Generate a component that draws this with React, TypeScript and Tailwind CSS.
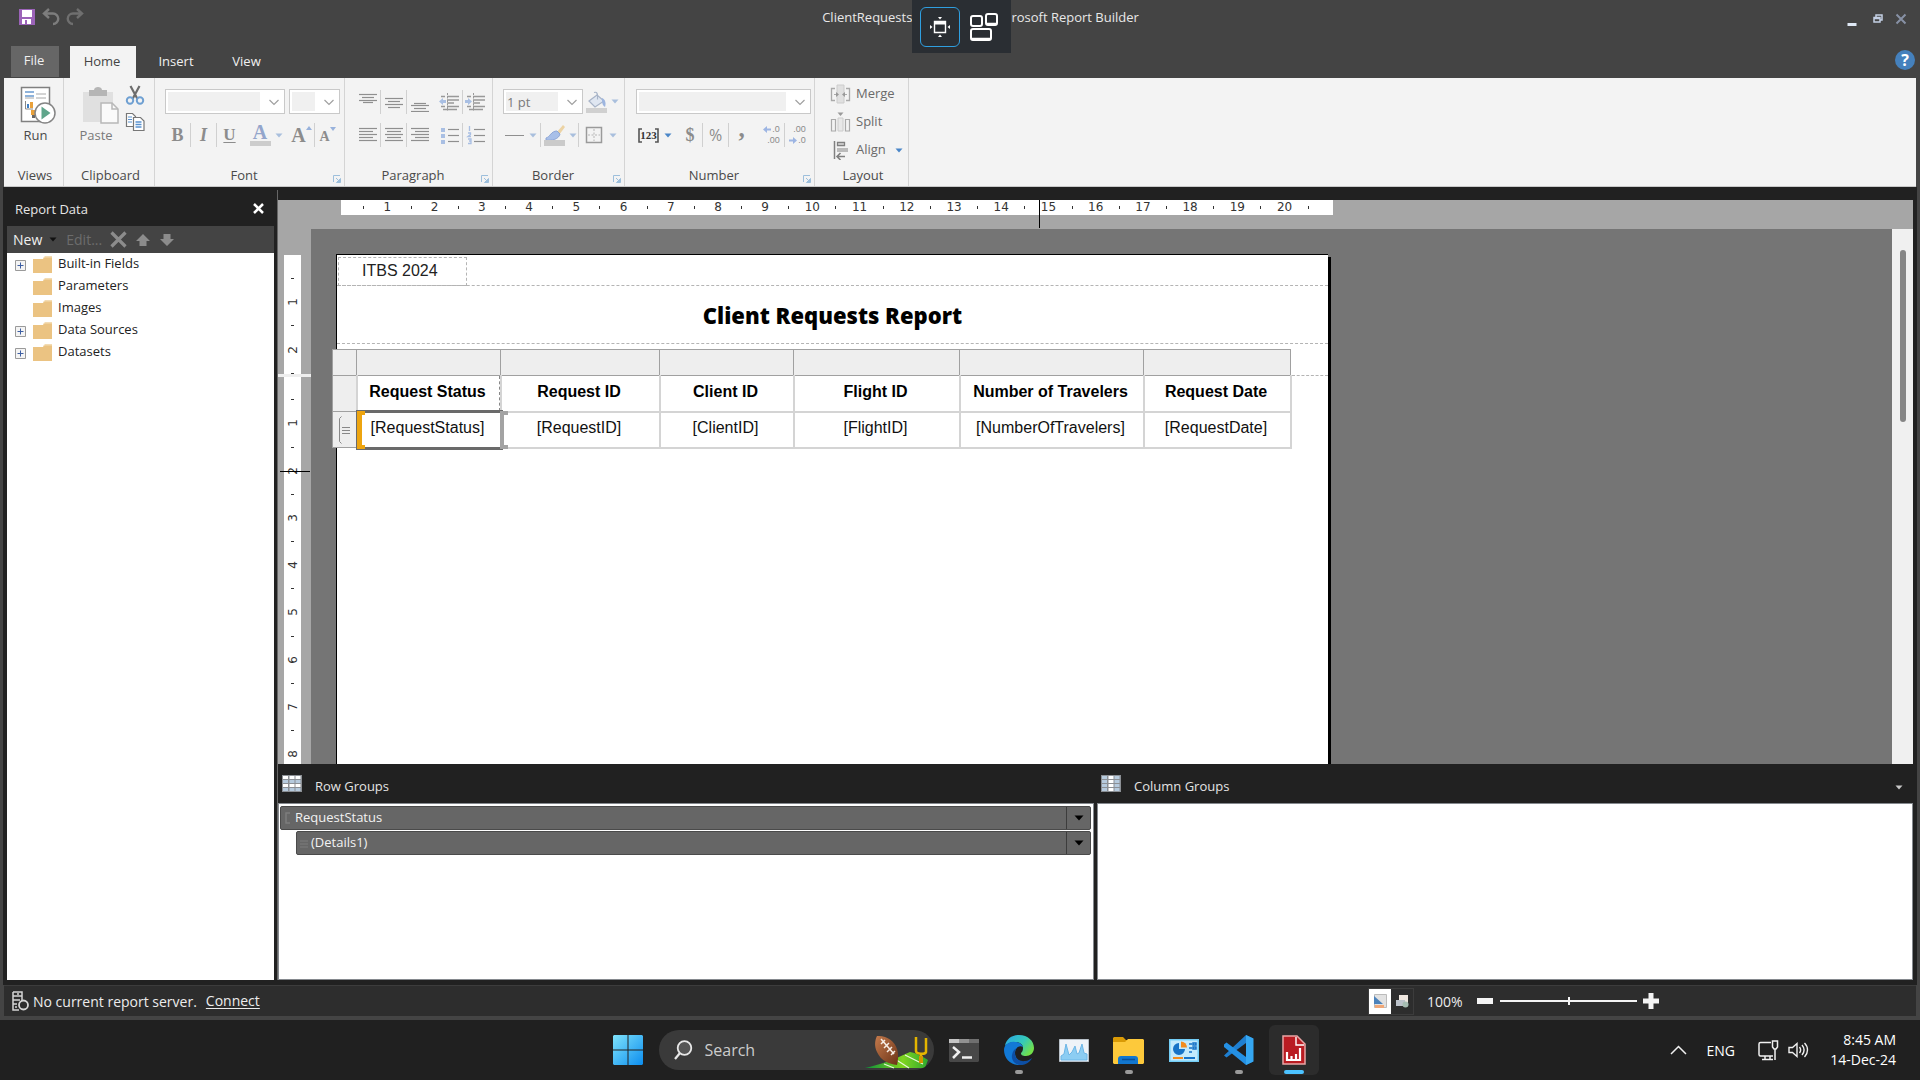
import React from "react";

type Kids = { children?: React.ReactNode };

/* ---------- small shared pieces ---------- */

function Arrow({ color = "#a9bfdd", className = "" }: { color?: string; className?: string }) {
  return (
    <svg width="8" height="5" viewBox="0 0 8 5" className={`shrink-0 ${className}`} aria-hidden="true">
      <path d="M0.5 0.5h7L4 4.5z" fill={color} />
    </svg>
  );
}

function Sep() {
  return <span className="h-6 w-px shrink-0 bg-[#d0d0d0]" />;
}

function Tool({ label, w = "w-[25px]", children }: Kids & { label: string; w?: string }) {
  return (
    <button type="button" aria-label={label} className={`flex h-6 shrink-0 items-center justify-center ${w}`}>
      {children}
    </button>
  );
}

function Group({ title, w, launcher = false, children }: Kids & { title: string; w: string; launcher?: boolean }) {
  return (
    <section className={`flex shrink-0 flex-col border-r border-[#d4d4d4] pt-[11px] ${w}`} aria-label={title}>
      <div className="flex-1">{children}</div>
      <div className={`relative flex h-[20px] items-center justify-center text-[#4a4a4a] ${launcher ? "pr-[11px]" : "pl-[3px]"}`}>
        {title}
        {launcher && (
          <button type="button" aria-label={`${title} settings`} className="absolute right-[3px] bottom-[3px]">
            <svg width="8" height="8" viewBox="0 0 8 8">
              <path d="M0.5 7V0.5H7" fill="none" stroke="#9dbfdc" />
              <path d="M3 3l3 3M7.5 3.5v4h-4z" stroke="#9dbfdc" fill="#9dbfdc" />
            </svg>
          </button>
        )}
      </div>
    </section>
  );
}

function Combo({ label, value = "", w }: { label: string; value?: string; w: string }) {
  return (
    <div className={`relative flex h-[25px] shrink-0 border border-[#c9c9c9] bg-white p-[2px] ${w}`}>
      <select
        aria-label={label}
        className="min-w-0 flex-1 appearance-none bg-[#f0f0f0] pl-px text-[13px] leading-[18px] text-[#7a7a7a] outline-none"
        defaultValue={value}
      >
        <option value={value}>{value}</option>
      </select>
      <svg width="22" height="19" viewBox="0 0 22 19" className="pointer-events-none shrink-0" aria-hidden="true">
        <path d="M9.500 8l4.500 4.500L18.500 8" fill="none" stroke="#a0a0a0" strokeWidth="1.200" />
      </svg>
    </div>
  );
}

/* rows of [x, y, length] */
function Lines({ rows, children }: Kids & { rows: number[][] }) {
  return (
    <svg width="20" height="20" viewBox="0 0 20 20" aria-hidden="true">
      {rows.map(([x, y, l], i) => (
        <path key={i} d={`M${x} ${y + 0.5}h${l}`} stroke="#8f8f8f" strokeWidth="1.200" />
      ))}
      {children}
    </svg>
  );
}

/* ---------- title bar ---------- */

function TitleBar() {
  return (
    <header className="flex h-[40px] shrink-0 items-start bg-[#444444]">
      <div className="flex flex-1 items-center gap-[6px] pt-[8px] pl-[18px]">
        <button type="button" aria-label="Save">
          <svg width="18" height="18" viewBox="0 0 18 18">
            <path d="M1 1h16v16H1z" fill="#9b63b8" />
            <path d="M4 2h10v7H4z" fill="#fff" />
            <path d="M4 11h9v5H4z" fill="#fff" />
            <path d="M7 12h2v4H7z" fill="#9b63b8" />
          </svg>
        </button>
        <button type="button" aria-label="Undo">
          <svg width="18" height="18" viewBox="0 0 18 18" fill="none" stroke="#7d7d7d" strokeWidth="2.400">
            <path d="M7 1L2 5.500l5 4.500M2 5.500h9a5 5 0 0 1 0 10.500" />
          </svg>
        </button>
        <button type="button" aria-label="Redo">
          <svg width="18" height="18" viewBox="0 0 18 18" fill="none" stroke="#6f6f6f" strokeWidth="2.400">
            <path d="M11 1l5 4.500-5 4.500M16 5.500H7A5 5 0 0 0 7 16" />
          </svg>
        </button>
      </div>
      <div className="flex h-[36px] items-center pl-9 text-[13px] text-[#e8e8e8]">
        <span>ClientRequests</span>
        <div className="relative w-[99px] self-start">
          <div className="absolute top-0 left-0 z-10 flex h-[53px] w-[99px] items-center gap-[9px] bg-[#2a2e33] pl-2">
            <button
              type="button"
              aria-label="Fit to window"
              className="flex h-[40px] w-[40px] items-center justify-center rounded-md border border-[#2f9fe0]"
            >
              <svg width="22" height="22" viewBox="0 0 22 22">
                <path d="M5.500 5.500h11v11h-11z" fill="none" stroke="#fff" strokeWidth="1.400" />
                <path d="M5 5h12v3.500H5z" fill="#fff" />
                <path d="M9 1h4l-2 2.500zM9 21h4l-2-2.500zM1 9v4l2.500-2zM21 9v4l-2.500-2z" fill="#fff" />
              </svg>
            </button>
            <button type="button" aria-label="Arrange windows">
              <svg width="30" height="30" viewBox="0 0 30 30" fill="none" stroke="#fff" strokeWidth="2">
                <rect x="2" y="4" width="11" height="10" rx="2" />
                <rect x="17" y="2" width="11" height="11" rx="2" />
                <rect x="2" y="17" width="20" height="11" rx="2" />
                <path d="M18 12h9M3 27h18" strokeWidth="2.500" />
              </svg>
            </button>
          </div>
        </div>
        <span>rosoft Report Builder</span>
      </div>
      <div className="flex flex-1 items-center justify-end gap-[16px] pt-[12px] pr-[13px]">
        <button type="button" aria-label="Minimize" className="pt-[2px]">
          <svg width="10" height="12" viewBox="0 0 10 12">
            <path d="M0.500 9h9v3h-9z" fill="#dfe8f5" />
          </svg>
        </button>
        <button type="button" aria-label="Restore">
          <svg width="10" height="12" viewBox="0 0 10 12" fill="none" stroke="#c3cfe4" strokeWidth="1.500">
            <path d="M3 4V2h6v5H7M1 4.500h6V9H1zM1 5.500h6" />
          </svg>
        </button>
        <button type="button" aria-label="Close" className="-ml-1">
          <svg width="12" height="12" viewBox="0 0 12 12" stroke="#8791a5" strokeWidth="2">
            <path d="M1.500 1.500l9 9M10.500 1.500l-9 9" />
          </svg>
        </button>
      </div>
    </header>
  );
}

function Tabs() {
  return (
    <nav className="flex h-[38px] shrink-0 items-end bg-[#444444] pl-[11px] text-[13px] text-[#f0f0f0]">
      <button type="button" className="mb-px h-[31px] w-[48px] bg-[#666666] pr-[2px] pb-[2px]">File</button>
      <button type="button" className="ml-[11px] h-[32px] w-[66px] bg-[#f3f3f3] pr-[2px] text-[#444444]">Home</button>
      <button type="button" className="h-[32px] w-[80px]">Insert</button>
      <button type="button" className="h-[32px] w-[61px]">View</button>
      <button
        type="button"
        aria-label="Help"
        className="mr-[5px] mb-[8px] ml-auto flex h-5 w-5 items-center justify-center rounded-full bg-[#4581bd] text-[16px] leading-5 font-bold text-white"
      >
        ?
      </button>
    </nav>
  );
}

/* ---------- ribbon ---------- */

const serif = "font-['Liberation_Serif',serif] font-bold";
const decimals = "flex flex-col items-end font-['Liberation_Sans',Arial,sans-serif] text-[9px] leading-[11px]";

function IndentIcon({ flip = false }: { flip?: boolean }) {
  return (
    <svg width="21" height="20" viewBox="0 0 21 20" aria-hidden="true">
      <path d="M2 4.500h4M8 4.500h12M8 8h12M8 11h7M2 14.500h4M8 14.500h12M4 17.500h14" stroke="#999" strokeWidth="1.500" />
      <path d="M8.500 1v18" stroke="#999" strokeDasharray="2 1.500" />
      {flip ? <path d="M7 9.500L3 6v2H0v3h3v2z" fill="#a9bfe3" /> : <path d="M7 8H4V6L0 9.500 4 13v-2h3z" fill="#a9bfe3" />}
    </svg>
  );
}

function Ribbon() {
  return (
    <div className="mx-1 flex h-[109px] shrink-0 overflow-hidden border-b border-[#c8c8c8] bg-[#f3f3f3] text-[13px] text-[#4a4a4a]">
      <Group title="Views" w="w-[60px]">
        <button type="button" className="mx-auto -mt-[3px] flex flex-col items-center pl-[8px] leading-[22px]">
          <svg width="38" height="38" viewBox="0 0 38 38">
            <path d="M2.500 1.500h28v34h-28z" fill="#fff" stroke="#808080" strokeWidth="1.500" />
            <path d="M6 6h9M6 10h9" stroke="#6b9bd0" strokeWidth="1.500" />
            <path d="M17 8h10M6 12h9M17 12h10" stroke="#a8a8a8" />
            <path d="M6.500 15v8H14" stroke="#888" fill="none" />
            <path d="M8 18h2v4H8z" fill="#3f7fc4" />
            <path d="M11 16h3v6h-3zM12 24h4v5h-4z" fill="#e9a13b" />
            <path d="M13 29h3v3h-3z" fill="#666" />
            <circle cx="26" cy="27" r="10" fill="#fff" stroke="#858585" strokeWidth="1.500" />
            <path d="M22.500 20.500v13l9-6.500z" fill="#5fa58b" />
          </svg>
          <span className="-ml-[4px]">Run</span>
        </button>
      </Group>
      <Group title="Clipboard" w="w-[91px]">
        <div className="-mt-[4px] flex pl-[12px]">
          <button type="button" className="flex w-[40px] flex-col items-center leading-[21px] text-[#7a7a7a]">
            <svg width="38" height="40" viewBox="0 0 38 40" className="ml-[8px]">
              <path d="M2 7h30v30H2z" fill="#e0e0e0" />
              <path d="M8 11V5h5c0-4 8-4 8 0h5v6z" fill="#b5b5b5" />
              <path d="M20 18h11l6 6v14H20z" fill="#fafafa" stroke="#b8b8b8" strokeWidth="1.500" />
              <path d="M31 18v6h6" fill="none" stroke="#b8b8b8" strokeWidth="1.500" />
            </svg>
            Paste
          </button>
          <div className="ml-[9px] flex flex-col gap-[7px]">
            <button type="button" aria-label="Cut">
              <svg width="20" height="20" viewBox="0 0 20 20" fill="none">
                <path d="M5.500 1l7 13M14.500 1l-7 13" stroke="#6c6c6c" strokeWidth="2.200" />
                <circle cx="5" cy="15.500" r="3.200" stroke="#6fa0d2" strokeWidth="2" />
                <circle cx="15" cy="15.500" r="3.200" stroke="#6fa0d2" strokeWidth="2" />
              </svg>
            </button>
            <button type="button" aria-label="Copy">
              <svg width="20" height="20" viewBox="0 0 20 20">
                <path d="M1.500 1.500h6l3 3v10h-9z" fill="#fff" stroke="#777" strokeWidth="1.200" />
                <path d="M3 5h4M3 7.500h4M3 10h4" stroke="#5b93cf" />
                <path d="M8.500 5.500h7l3.500 3.500v9.500H8.500z" fill="#fff" stroke="#777" strokeWidth="1.200" />
                <path d="M10.500 10h6M10.500 12.500h6M10.500 15h6" stroke="#5b93cf" strokeWidth="1.400" />
              </svg>
            </button>
          </div>
        </div>
      </Group>
      <Group title="Font" w="w-[190px]" launcher>
        <div className="flex gap-1 pl-[10px]">
          <Combo label="Font family" w="w-[120px]" />
          <Combo label="Font size" w="w-[51px]" />
        </div>
        <div className="mt-[9px] flex items-center pl-[10px] text-[#8c8c8c]">
          <Tool label="Bold"><span className={`${serif} text-[18px]`}>B</span></Tool>
          <Sep />
          <Tool label="Italic"><span className={`${serif} text-[18px] italic`}>I</span></Tool>
          <Sep />
          <Tool label="Underline"><span className={`${serif} text-[17px] underline underline-offset-2`}>U</span></Tool>
          <Tool label="Font color" w="ml-[6px] w-[36px]">
            <span className="flex flex-col items-center">
              <span className={`${serif} h-[16px] text-[20px] leading-[15px] text-[#93a5cb]`}>A</span>
              <span className="h-[5px] w-[21px] bg-[#cccccc]" />
            </span>
            <Arrow className="ml-[4px]" />
          </Tool>
          <Tool label="Grow font" w="ml-[5px] w-[25px]">
            <span className={`${serif} text-[20px] leading-6`}>A</span>
            <svg width="6" height="18" viewBox="0 0 6 18"><path d="M0 4h6L3 0z" fill="#98b2dc" /></svg>
          </Tool>
          <Sep />
          <Tool label="Shrink font">
            <span className={`${serif} pt-[4px] text-[14px] leading-6`}>A</span>
            <svg width="6" height="18" viewBox="0 0 6 18"><path d="M0 1h6L3 5z" fill="#98b2dc" /></svg>
          </Tool>
        </div>
      </Group>
      <Group title="Paragraph" w="w-[148px]" launcher>
        <div className="flex h-[25px] items-center pl-[10px]">
          <Tool label="Align top"><Lines rows={[[1, 2, 18], [4, 5, 12], [1, 8, 18], [5, 10, 10]]} /></Tool>
          <Sep />
          <Tool label="Align middle"><Lines rows={[[1, 6, 18], [4, 9, 12], [1, 12, 18], [4, 15, 12]]} /></Tool>
          <Sep />
          <Tool label="Align bottom"><Lines rows={[[4, 11, 12], [1, 13, 18], [4, 16, 12], [1, 19, 18]]} /></Tool>
          <Tool label="Decrease indent" w="ml-[5px] w-[25px]"><IndentIcon /></Tool>
          <Sep />
          <Tool label="Increase indent"><IndentIcon flip /></Tool>
        </div>
        <div className="mt-[9px] flex items-center pl-[10px]">
          <Tool label="Align left"><Lines rows={[[1, 3, 18], [1, 6, 14], [1, 9, 18], [1, 12, 14], [1, 15, 18]]} /></Tool>
          <Sep />
          <Tool label="Center"><Lines rows={[[1, 3, 18], [3, 6, 14], [1, 9, 18], [3, 12, 14], [1, 15, 18]]} /></Tool>
          <Sep />
          <Tool label="Align right"><Lines rows={[[1, 3, 18], [5, 6, 14], [1, 9, 18], [5, 12, 14], [1, 15, 18]]} /></Tool>
          <Tool label="Bullets" w="ml-[5px] w-[25px]">
            <Lines rows={[[8, 4, 11], [8, 10, 11], [8, 16, 11]]}>
              <path d="M1 3h4v4H1zM1 9h4v4H1zM1 15h4v4H1z" fill="#a9bfe3" />
            </Lines>
          </Tool>
          <Sep />
          <Tool label="Numbering">
            <Lines rows={[[8, 4, 11], [8, 10, 11], [8, 16, 11]]}>
              <path d="M3.500 1v5M2 8h2.500v1.500L2 11.500h3M2 14h3v2H3h2v2.500H2" fill="none" stroke="#a9bfe3" strokeWidth="1.300" />
            </Lines>
          </Tool>
        </div>
      </Group>
      <Group title="Border" w="w-[132px]" launcher>
        <div className="flex items-center pl-[10px]">
          <Combo label="Border width" value="1 pt" w="w-[80px]" />
          <Tool label="Fill color" w="w-[37px]">
            <svg width="22" height="22" viewBox="0 0 22 22">
              <path d="M4 10l8-6 7 6-9 6z" fill="#dfe6f1" stroke="#a8b4c8" strokeWidth="1.200" />
              <path d="M9 1.500c3-1 4 1 3.500 7" fill="none" stroke="#a8b4c8" strokeWidth="1.200" />
              <path d="M17 7c4 2 4 6 3 9-2-1-3-4-3-6z" fill="#9db5df" />
              <path d="M1 17h21v5H1z" fill="#d0d0d0" />
            </svg>
            <Arrow className="ml-[4px]" />
          </Tool>
        </div>
        <div className="mt-[9px] flex items-center pl-[8px]">
          <Tool label="Line style" w="w-[39px]">
            <span className="h-px w-[19px] bg-[#8f8f8f]" />
            <Arrow className="ml-[5px]" />
          </Tool>
          <Sep />
          <Tool label="Line color" w="w-[37px]">
            <svg width="22" height="24" viewBox="0 0 22 24">
              <path d="M14 9l6-7 2 2-6 8z" fill="#ecd3a4" />
              <path d="M3 15c4-1 5-7 11-7l3 3c-1 5-8 7-14 6z" fill="#a8bfe8" stroke="#8ea6d6" />
              <path d="M1 17h21v6H1z" fill="#cacaca" />
            </svg>
            <Arrow className="ml-[4px]" />
          </Tool>
          <Sep />
          <Tool label="Borders" w="w-[43px]">
            <svg width="18" height="18" viewBox="0 0 18 18" fill="none">
              <path d="M1.500 1.500h15v15h-15z" stroke="#9a9a9a" strokeWidth="1.500" />
              <path d="M9 3v12M3 9h12" stroke="#b5b5b5" strokeDasharray="2 1.500" />
            </svg>
            <Arrow className="ml-[6px]" />
          </Tool>
        </div>
      </Group>
      <Group title="Number" w="w-[190px]" launcher>
        <div className="pl-[11px]">
          <Combo label="Number format" w="w-[175px]" />
        </div>
        <div className="mt-[9px] flex items-center pl-[11px] text-[#8c8c8c]">
          <Tool label="Placeholder style" w="w-[38px]">
            <svg width="4" height="15" viewBox="0 0 4 15" fill="none" stroke="#555" strokeWidth="1.600"><path d="M4 1H1v13h3" /></svg>
            <span className={`${serif} -mx-[2px] text-[11px] leading-4 text-[#333333]`}>123</span>
            <svg width="4" height="15" viewBox="0 0 4 15" fill="none" stroke="#555" strokeWidth="1.600"><path d="M0 1h3v13H0" /></svg>
            <Arrow color="#4a86c8" className="ml-[5px]" />
          </Tool>
          <Tool label="Currency" w="ml-[4px] w-[24px]"><span className={`${serif} text-[18px]`}>$</span></Tool>
          <Sep />
          <Tool label="Percent"><span className="text-[16px]">%</span></Tool>
          <Sep />
          <Tool label="Thousands separator"><span className={`${serif} pb-[12px] text-[25px] leading-3`}>,</span></Tool>
          <Tool label="Increase decimals" w="ml-[5px] w-[25px]">
            <span className={decimals}>
              <span className="flex items-center gap-px">
                <svg width="8" height="7" viewBox="0 0 8 7"><path d="M0 3.500L4 0v2.500h4v2H4V7z" fill="#9db5e3" /></svg>.0
              </span>
              <span>.00</span>
            </span>
          </Tool>
          <Sep />
          <Tool label="Decrease decimals">
            <span className={decimals}>
              <span>.00</span>
              <span className="flex items-center gap-px">
                <svg width="8" height="7" viewBox="0 0 8 7"><path d="M8 3.500L4 0v2.500H0v2h4V7z" fill="#9db5e3" /></svg>.0
              </span>
            </span>
          </Tool>
        </div>
      </Group>
      <Group title="Layout" w="w-[94px]">
        <div className="-mt-[9px] flex flex-col pl-[15px] text-[#6a6a6a]">
          <button type="button" className="flex h-7 items-center gap-[5px]">
            <svg width="21" height="20" viewBox="0 0 21 20" fill="none" stroke="#aaa">
              <path d="M7 1h7v18H7z" fill="#e0e0e0" stroke="#ccc" />
              <path d="M5 4.500H1.500v12H5M16 4.500h3.500v12H16" strokeWidth="1.300" />
              <path d="M4 10.500h3M17 10.500h-3" />
              <path d="M6 8l3 2.500L6 13zM15 8l-3 2.500 3 2.500z" fill="#999" stroke="none" />
            </svg>
            Merge
          </button>
          <button type="button" className="flex h-7 items-center gap-[5px]">
            <svg width="21" height="20" viewBox="0 0 21 20" fill="none" stroke="#aaa">
              <path d="M8 6h5v13H8z" fill="#e8e8e8" stroke="#ccc" />
              <path d="M1.500 19V7.500h4V19zM15.500 19V7.500h4V19z" strokeWidth="1.200" />
              <path d="M7.500 0.500h6l-3 3.500z" fill="#999" stroke="none" />
            </svg>
            Split
          </button>
          <button type="button" className="flex h-7 items-center gap-[5px]">
            <svg width="21" height="20" viewBox="0 0 21 20" fill="none" stroke="#808080">
              <path d="M4.500 1v18" strokeWidth="1.500" />
              <path d="M7.500 2.500h7v3h-7z" fill="#ddd" strokeWidth="1.300" />
              <path d="M7 8h11v4H7z" fill="#bbb" stroke="none" />
              <path d="M7 16.500h8M10.500 13L7 16.500l3.500 3.500" strokeWidth="1.600" />
            </svg>
            Align
            <Arrow color="#4a86c8" className="ml-[4px]" />
          </button>
        </div>
      </Group>
    </div>
  );
}

/* ---------- report data ---------- */

const tree = [
  { name: "Built-in Fields", open: true },
  { name: "Parameters", open: false },
  { name: "Images", open: false },
  { name: "Data Sources", open: true },
  { name: "Datasets", open: true },
];

function ReportData() {
  return (
    <aside className="flex w-[267px] shrink-0 flex-col text-[13px]">
      <div className="flex h-[36px] items-center justify-between pr-[10px] pl-[8px] text-[#e6e6e6]">
        <h2 className="pt-[3px]">Report Data</h2>
        <button type="button" aria-label="Close Report Data">
          <svg width="11" height="11" viewBox="0 0 11 11" stroke="#fff" strokeWidth="2.500">
            <path d="M1 1l9 9M10 1l-9 9" />
          </svg>
        </button>
      </div>
      <div className="flex h-[27px] items-center bg-[#444444] pl-[6px] text-[#f0f0f0]">
        <button type="button" className="flex items-center text-[14px]">
          New
          <Arrow color="#111111" className="ml-[7px]" />
        </button>
        <button type="button" disabled className="ml-[9px] w-[36px] text-left text-[14px] text-[#6c6c6c]">Edit...</button>
        <button type="button" aria-label="Delete" className="ml-[8px]">
          <svg width="17" height="17" viewBox="0 0 17 17" stroke="#8c8c8c" strokeWidth="3.200">
            <path d="M1.500 1.500l14 14M15.500 1.500l-14 14" />
          </svg>
        </button>
        <button type="button" aria-label="Move up" className="ml-[9px]">
          <svg width="14" height="12" viewBox="0 0 14 12"><path d="M7 0l7 7h-3.500v5h-7V7H0z" fill="#8c8c8c" /></svg>
        </button>
        <button type="button" aria-label="Move down" className="ml-[10px]">
          <svg width="14" height="12" viewBox="0 0 14 12"><path d="M7 12l7-7h-3.500V0h-7v5H0z" fill="#8c8c8c" /></svg>
        </button>
      </div>
      <ul className="flex-1 bg-white pl-[8px] text-[#222222]">
        {tree.map((t) => (
          <li key={t.name} className="flex h-[22px] items-center">
            <span className="flex w-[18px] shrink-0 pt-[3px]">
              {t.open && (
                <button type="button" aria-label={`Expand ${t.name}`}>
                  <svg width="11" height="11" viewBox="0 0 11 11">
                    <path d="M0.500 0.500h10v10h-10z" fill="#f4f4f4" stroke="#9a9a9a" />
                    <path d="M2.500 5.500h6M5.500 2.500v6" stroke="#3e5fa3" />
                  </svg>
                </button>
              )}
            </span>
            <svg width="19" height="17" viewBox="0 0 19 17" className="mr-[6px] shrink-0" aria-hidden="true">
              <path d="M10 4V2l2-2h7v5h-9z" fill="#f3dcb4" />
              <path d="M0 3h10l2-1.500h7V17H0z" fill="#ebc382" />
            </svg>
            {t.name}
          </li>
        ))}
      </ul>
    </aside>
  );
}

/* ---------- design surface ---------- */

function HorizontalRuler() {
  const marks = Array.from({ length: 41 }, (_, i) => i + 1);
  return (
    <div className="relative h-[29px] shrink-0 bg-[#a6a6a6] pl-[63px]">
      <div className="flex h-[15px] w-[992px] items-center bg-white pr-[13px] pb-px pl-[11px] font-['DejaVu_Sans',sans-serif] text-[12px] leading-[14px] text-[#333333]">
        {marks.map((m) => (
          <span key={m} className="flex flex-1 basis-0 justify-center">
            {m % 2 === 0 ? <span className="-mx-2">{m / 2}</span> : <span className="h-[3px] w-px self-center bg-[#333333]" />}
          </span>
        ))}
      </div>
      <span className="absolute top-0 left-[761px] h-[28px] w-px bg-black" />
    </div>
  );
}

function VerticalMarks({ count }: { count: number }) {
  return (
    <>
      {Array.from({ length: count }, (_, i) => i + 1).map((m) => (
        <span key={m} className="flex flex-1 items-center justify-center">
          {m % 2 === 0 ? <span className="-rotate-90">{m / 2}</span> : <span className="h-px w-[3px] bg-[#333333]" />}
        </span>
      ))}
    </>
  );
}

function VerticalRuler() {
  return (
    <div className="relative flex w-[33px] shrink-0 flex-col overflow-hidden bg-[#a6a6a6] pt-[26px] font-['DejaVu_Sans',sans-serif] text-[12px] leading-[14px] text-[#333333]">
      <div className="ml-[6px] h-[119px] w-[17px] shrink-0 overflow-hidden bg-white">
        <div className="flex h-[130px] flex-col pt-3">
          <VerticalMarks count={5} />
        </div>
      </div>
      <div className="h-[3px] shrink-0 bg-[#eeeeee]" />
      <div className="ml-[6px] w-[17px] flex-1 overflow-hidden bg-white">
        <div className="flex h-[389px] flex-col pt-[11px]">
          <VerticalMarks count={16} />
        </div>
      </div>
      <span className="absolute top-[242px] left-[2px] h-px w-[30px] bg-black" />
    </div>
  );
}

const columns = [
  { head: "Request Status", field: "[RequestStatus]", w: "w-[144px]" },
  { head: "Request ID", field: "[RequestID]", w: "w-[159px]" },
  { head: "Client ID", field: "[ClientID]", w: "w-[134px]" },
  { head: "Flight ID", field: "[FlightID]", w: "w-[166px]" },
  { head: "Number of Travelers", field: "[NumberOfTravelers]", w: "w-[184px]" },
  { head: "Request Date", field: "[RequestDate]", w: "w-[147px]" },
];

function ReportTable() {
  return (
    <table className="relative -ml-[5px] w-[958px] table-fixed border-collapse text-center text-[16px] leading-5 text-[#111111]">
      <colgroup>
        <col className="w-[24px]" />
        {columns.map((c) => (
          <col key={c.head} className={c.w} />
        ))}
      </colgroup>
      <tbody>
        <tr className="h-[26px]">
          <td className="border border-[#a0a0a0] bg-[#eeeeee]" />
          {columns.map((c) => (
            <td key={c.head} className="border border-[#a0a0a0] bg-[#eeeeee]" />
          ))}
        </tr>
        <tr className="h-[36px]">
          <td className="border border-[#a0a0a0] bg-[#eeeeee]" />
          {columns.map((c, i) => (
            <th key={c.head} scope="col" className="relative border-2 border-t border-[#d4d4d4] bg-white p-0 pr-[2px] pb-[2px] font-bold whitespace-nowrap text-black">
              {c.head}
              {i === 0 && <span className="absolute top-0 -right-[3px] h-full w-[4px] border-x border-dashed border-[#888888]" />}
            </th>
          ))}
        </tr>
        <tr className="h-[36px]">
          <td className="border border-[#a0a0a0] bg-[#eeeeee] p-0">
            <svg width="22" height="32" viewBox="0 0 22 32" className="block" fill="none" stroke="#888">
              <path d="M8.500 2.500l-2 2v23l2 2" />
              <path d="M9 13.500h8M9 16.500h8M9 19.500h8" />
            </svg>
          </td>
          {columns.map((c, i) => (
            <td key={c.head} className="relative border-2 border-[#d4d4d4] bg-white p-0 pr-[2px] pb-[3px]">
              {c.field}
              {i === 0 && (
                <>
                  <span className="absolute -top-[3px] -right-[3px] -bottom-[3px] -left-[2px] border-[3px] border-[#6a6a6a]" />
                  <span className="absolute -top-[2px] -bottom-[2px] -left-px w-[8px] border-y-4 border-l-[5px] border-[#eda40f]" />
                  <span className="absolute -top-[2px] -right-[8px] -bottom-[2px] z-10 w-[8px] border-y-4 border-l-[4px] border-[#a3a3a3]" />
                </>
              )}
            </td>
          ))}
        </tr>
      </tbody>
    </table>
  );
}

function Page() {
  return (
    <div className="flex min-w-0 flex-1 overflow-hidden bg-[#757575] pt-[25px] pl-[25px]">
      <div className="mr-[3px] w-[992px] shrink-0 border-t border-l border-black bg-white shadow-[3px_3px_0_#000000]">
        <div className="h-[31px] border-b border-dashed border-[#b4b4b4] pt-[2px] pl-px">
          <div className="h-[29px] w-[129px] border border-dashed border-[#b4b4b4] pl-[23px] font-['Liberation_Sans',Arial,sans-serif] text-[16px] leading-[26px] text-[#222222]">
            ITBS 2024
          </div>
        </div>
        <h1 className="mb-[5px] flex h-[58px] items-center justify-center border-b border-dashed border-[#b4b4b4] pt-[2px] font-['Open_Sans',sans-serif] text-[22px] font-extrabold text-black">
          Client Requests Report
        </h1>
        <div className="flex font-['Liberation_Sans',Arial,sans-serif]">
          <ReportTable />
          <div className="h-[27px] flex-1 border-b border-dashed border-[#b4b4b4]" />
        </div>
      </div>
    </div>
  );
}

/* ---------- grouping pane ---------- */

function GridIcon({ vertical = false }: { vertical?: boolean }) {
  return (
    <svg width="20" height="17" viewBox="0 0 20 17" aria-hidden="true">
      <path d="M0 0h20v17H0z" fill="#8b8f94" />
      {[0, 1, 2].map((c) =>
        [0, 1, 2, 3].map((r) => (
          <rect
            key={`${c}-${r}`}
            x={1 + c * 6 + (c > 0 ? 0.5 : 0)}
            y={1 + r * 4}
            width="5"
            height="3"
            fill={vertical ? (c === 1 ? "#ffffff" : "#b6cadd") : r % 2 === 0 ? "#ffffff" : "#b6cadd"}
          />
        )),
      )}
    </svg>
  );
}

function GroupRow({ name, indent = false }: { name: string; indent?: boolean }) {
  return (
    <li className={`flex h-[24px] items-stretch rounded-[2px] border border-[#4a4a4a] bg-[#666666] text-[#f2f2f2] ${indent ? "ml-[16px]" : ""}`}>
      <span className="flex w-[14px] shrink-0 items-center justify-center">
        <svg width="8" height="12" viewBox="0 0 8 12" fill="none" stroke="#7d7d7d" strokeWidth="1.500" aria-hidden="true">
          {indent ? <path d="M0 4h8M0 7h8M0 10h8" strokeWidth="1" /> : <path d="M6 1H2v10h4" />}
        </svg>
      </span>
      <span className="flex-1 leading-[21px]">{name}</span>
      <button type="button" aria-label={`${name} options`} className="flex w-[24px] items-center justify-center border-l border-[#3c3c3c]">
        <svg width="10" height="6" viewBox="0 0 10 6"><path d="M0.500 0.500h9L5 5.500z" fill="#000" /></svg>
      </button>
    </li>
  );
}

function Groups() {
  return (
    <div className="flex h-[216px] shrink-0 gap-[3px] text-[13px] text-[#e4e4e4]">
      <section className="flex flex-1 flex-col">
        <div className="flex h-[39px] items-center pl-[4px]">
          <GridIcon />
          <h2 className="ml-[13px] pt-[7px]">Row Groups</h2>
        </div>
        <ul className="flex flex-1 flex-col gap-px border border-[#85898e] bg-white py-[2px] pr-[2px] pl-px">
          <GroupRow name="RequestStatus" />
          <GroupRow name="(Details1)" indent />
        </ul>
      </section>
      <section className="flex flex-1 flex-col">
        <div className="flex h-[39px] items-center pr-[10px] pl-[4px]">
          <GridIcon vertical />
          <h2 className="ml-[13px] pt-[7px]">Column Groups</h2>
          <button type="button" aria-label="Grouping options" className="ml-auto pt-[8px]">
            <Arrow color="#c8c8c8" />
          </button>
        </div>
        <div className="flex-1 border border-[#85898e] bg-white" />
      </section>
    </div>
  );
}

/* ---------- status bar ---------- */

function StatusBar() {
  return (
    <footer className="mx-1 flex h-[31px] shrink-0 items-center border-t border-[#3c3c3c] bg-[#2d2d2d] pl-[8px] text-[14px] text-[#ececec]">
      <svg width="18" height="20" viewBox="0 0 18 20" fill="none" stroke="#d5d5d5" strokeWidth="1.500" aria-hidden="true">
        <path d="M1 1h9v9M1 1v18h6M1 5h9M1 9h7M1 13h4M5 3h2M3 16h2" />
        <circle cx="11.500" cy="14" r="4.500" strokeWidth="1.800" />
      </svg>
      <span className="ml-[3px]">No current report server.</span>
      <a href="#connect" className="ml-[9px] pb-[2px] underline underline-offset-2">Connect</a>
      <div className="ml-auto flex h-[27px] border border-[#3c3c3c]">
        <button type="button" aria-label="Design view" className="flex w-[22px] items-center justify-center bg-white">
          <svg width="13" height="14" viewBox="0 0 13 14">
            <path d="M0.500 0.500h12v13H0.500z" fill="#e2e2e2" stroke="#bbb" />
            <path d="M0 2l9 8H0z" fill="#4d83bb" />
            <path d="M1 11h9v3H1z" fill="#f0a878" />
          </svg>
        </button>
        <button type="button" aria-label="Preview" className="flex w-[22px] items-center justify-center">
          <svg width="13" height="14" viewBox="0 0 13 14">
            <path d="M3 1h9v8H3z" fill="#efe7e0" />
            <path d="M0 6h9v6H0z" fill="#bcc2ca" />
            <circle cx="9.500" cy="10.500" r="3" fill="#a6bdb2" />
          </svg>
        </button>
      </div>
      <output className="ml-[13px] w-[39px]">100%</output>
      <button type="button" aria-label="Zoom out" className="ml-[11px]">
        <svg width="16" height="16" viewBox="0 0 16 16"><path d="M0 5h16v6H0z" fill="#f4f4f4" /></svg>
      </button>
      <div className="relative ml-[7px] flex h-[16px] w-[137px] items-center">
        <span className="h-[2px] w-full bg-[#f4f4f4]" />
        <input
          type="range"
          aria-label="Zoom"
          defaultValue={50}
          className="absolute inset-0 w-full appearance-none bg-transparent [&::-webkit-slider-thumb]:h-[8px] [&::-webkit-slider-thumb]:w-[2px] [&::-webkit-slider-thumb]:appearance-none [&::-webkit-slider-thumb]:bg-[#f4f4f4]"
        />
      </div>
      <button type="button" aria-label="Zoom in" className="mr-[257px] ml-[6px]">
        <svg width="16" height="16" viewBox="0 0 16 16">
          <path d="M5.500 0h5v5.500H16v5h-5.500V16h-5v-5.500H0v-5h5.500z" fill="#f4f4f4" />
        </svg>
      </button>
    </footer>
  );
}

/* ---------- taskbar ---------- */

function TaskbarApp({ label, state = "idle", children }: Kids & { label: string; state?: "idle" | "open" | "active" }) {
  return (
    <button
      type="button"
      aria-label={label}
      className={`relative flex h-[50px] w-[50px] items-center justify-center rounded-md ${state === "active" ? "bg-[#2c2c2c]" : ""}`}
    >
      {children}
      {state === "open" && <span className="absolute bottom-px h-[4px] w-[8px] rounded-full bg-[#9a9a9a]" />}
      {state === "active" && <span className="absolute bottom-px h-[4px] w-[20px] rounded-full bg-[#4cc2ff]" />}
    </button>
  );
}

function Taskbar() {
  return (
    <div className="grid h-[60px] shrink-0 grid-cols-[1fr_auto_1fr] items-center bg-[#202020] font-['Open_Sans',sans-serif] text-white">
      <div />
      <div className="flex items-center gap-[5px] pl-px">
        <button type="button" aria-label="Start" className="flex h-[50px] w-[50px] items-center justify-center">
          <svg width="30" height="30" viewBox="0 0 30 30">
            <defs>
              <linearGradient id="win" x1="0" y1="0" x2="1" y2="1">
                <stop offset="0" stopColor="#7fe3fb" />
                <stop offset="1" stopColor="#0c8dee" />
              </linearGradient>
            </defs>
            <path d="M1 0h13.500v14.500H0V1zM15.500 0H29l1 1v13.500H15.500zM0 15.500h14.500V30H1l-1-1zM15.500 15.500H30V29l-1 1H15.500z" fill="url(#win)" />
          </svg>
        </button>
        <label className="relative ml-px flex h-[40px] w-[275px] items-center overflow-hidden rounded-full bg-[#3a3a3a] pl-[15px]">
          <svg width="19" height="20" viewBox="0 0 19 20" fill="none" stroke="#e8e8e8" strokeWidth="1.800" aria-hidden="true">
            <circle cx="10.500" cy="8" r="6.800" fill="#555" />
            <path d="M6 13l-5 6" strokeWidth="2.200" />
          </svg>
          <input aria-label="Search" placeholder="Search" className="ml-[12px] w-[120px] bg-transparent text-[16px] outline-none placeholder:text-[#cccccc]" />
          <svg width="70" height="40" viewBox="0 0 70 40" className="absolute right-0 bottom-0" aria-hidden="true">
            <defs>
              <linearGradient id="field" x1="0" y1="0" x2="1" y2="0">
                <stop offset="0" stopColor="#0d8f3a" />
                <stop offset="0.600" stopColor="#7fd420" />
                <stop offset="1" stopColor="#2fa82e" />
              </linearGradient>
              <linearGradient id="ball" x1="0" y1="0" x2="1" y2="1">
                <stop offset="0" stopColor="#c47a4c" />
                <stop offset="1" stopColor="#6b3317" />
              </linearGradient>
            </defs>
            <path d="M1 38c14-3 28-8 45-16 6 1 12 4 18 8l-3 8z" fill="url(#field)" />
            <path d="M20 34l10 4M31 29l14 9M41 25l18 9" stroke="#e9f7d8" strokeWidth="1.200" />
            <path d="M13 6c9-1 18 5 20 13 2 6 1 12 0 16-8-1-16-4-20-13-3-6-2-12 0-16z" fill="url(#ball)" />
            <path d="M17 9l13 15M17 14l4-4M20 18l5-5M23 22l5-5M27 25l4-4" stroke="#f6ece4" strokeWidth="1.500" fill="none" />
            <path d="M52 7v14c0 3 9 4 10 1V8M57 23v10" stroke="#e4b500" strokeWidth="2.500" fill="none" />
            <path d="M57 26v7" stroke="#d19600" strokeWidth="4" />
          </svg>
        </label>
        <TaskbarApp label="Terminal">
          <svg width="30" height="23" viewBox="0 0 30 23">
            <path d="M1 0h28l1 1v21l-1 1H1l-1-1V1z" fill="#484848" />
            <path d="M0 0h10v4H0z" fill="#c4c4c4" />
            <path d="M10 0h10v4H10z" fill="#929292" />
            <path d="M20 0h10v4H20z" fill="#6f6f6f" />
            <path d="M4 8l6 5-6 6" fill="none" stroke="#f0f0f0" strokeWidth="2.500" />
            <path d="M13 18.500h10" stroke="#f0f0f0" strokeWidth="2.500" />
          </svg>
        </TaskbarApp>
        <TaskbarApp label="Microsoft Edge" state="open">
          <svg width="30" height="30" viewBox="0 0 30 30">
            <defs>
              <linearGradient id="edge1" x1="0" y1="0" x2="1" y2="0.600">
                <stop offset="0" stopColor="#2aa6e8" />
                <stop offset="0.600" stopColor="#35c9b9" />
                <stop offset="1" stopColor="#72e04a" />
              </linearGradient>
            </defs>
            <path d="M1 11C2 4 8 0 15 0c9 0 15 6 15 13 0 5-4 8-8 8-4 0-5-1-5-3 1-1 2-2 2-5 0-4-4-6-8-6-5 0-8 2-10 4z" fill="url(#edge1)" />
            <path d="M0 15C0 10 5 6 11 7c4 0 7 2 8 5-4-2-8 1-8 6 0 6 5 9 9 9h3c-2 2-5 3-8 3C6 30 0 23 0 15z" fill="#1279d6" />
            <path d="M11 17c-1 6 4 10 10 9 3 0 5-2 7-3-2 4-6 7-11 7-6 0-10-5-9-10 1-4 2-6 5-7-1 1-2 2-2 4z" fill="#0d4fa5" />
          </svg>
        </TaskbarApp>
        <TaskbarApp label="Performance Monitor">
          <svg width="30" height="23" viewBox="0 0 30 23">
            <path d="M0.500 0.500h29v22H0.500z" fill="#eef3f8" stroke="#b8c0c8" />
            <path d="M2 21v-4l3-2 2-10 3 11 3-3 3-6 2 8 2-1 3-9 2 9 3 1v6z" fill="#8ccdf3" stroke="#6db6e6" />
          </svg>
        </TaskbarApp>
        <TaskbarApp label="File Explorer" state="open">
          <svg width="31" height="27" viewBox="0 0 31 27">
            <path d="M1 0h9l3 3h8v6H0V1z" fill="#d99a06" />
            <path d="M0 5h12l3-3h15l1 1v23l-1 1H1l-1-1z" fill="#fdc93b" />
            <path d="M5 27v-5c0-2 1-3 3-3h14c2 0 3 1 3 3v5z" fill="#1277cf" />
            <path d="M9 22.500h13" stroke="#0b4f96" strokeWidth="1.500" />
          </svg>
        </TaskbarApp>
        <TaskbarApp label="Control Panel">
          <svg width="30" height="23" viewBox="0 0 30 23">
            <path d="M0 0h30v23H0z" fill="#73cdf6" />
            <path d="M1.500 1.500h27v20h-27z" fill="#c3eafc" />
            <path d="M10 4a6 6 0 1 0 6 6h-6z" fill="#1673c7" />
            <path d="M12 2.500a6 6 0 0 1 6 6h-6z" fill="#f28c1e" />
            <path d="M20 5h3M20 9h3M20 13h3M24 4h3v2h-3zM24 8h3v2h-3z" stroke="#1673c7" strokeWidth="1.500" fill="none" />
            <path d="M4 19h10" stroke="#f28c1e" strokeWidth="2" />
            <path d="M15 19h11" stroke="#1673c7" strokeWidth="2" />
          </svg>
        </TaskbarApp>
        <TaskbarApp label="Visual Studio Code" state="open">
          <svg width="31" height="30" viewBox="0 0 31 30">
            <path d="M23 0l7 3.500v23L23 30V8L3.500 22.500 1 20.500z" fill="#1f7fd0" />
            <path d="M1 9.500L3.500 7.500 23 22v8L1 12z" fill="#2490e4" />
            <path d="M23 0l7.500 3.500v23L23 30z" fill="#35a7f2" />
          </svg>
        </TaskbarApp>
        <TaskbarApp label="Report Builder" state="active">
          <svg width="24" height="30" viewBox="0 0 24 30">
            <path d="M1 1h14l8 8v20H1z" fill="#b91c22" stroke="#e9a5a5" strokeWidth="1.500" />
            <path d="M14 2v8h8" fill="none" stroke="#fff" strokeWidth="1.400" />
            <path d="M5 17v8h13V13M9.500 25v-4M14 25v-6" fill="none" stroke="#fff" strokeWidth="2.200" />
          </svg>
        </TaskbarApp>
      </div>
      <div className="flex items-center justify-end pr-[24px] text-[14px]">
        <button type="button" aria-label="Show hidden icons">
          <svg width="17" height="10" viewBox="0 0 17 10" fill="none" stroke="#f0f0f0" strokeWidth="1.500">
            <path d="M1 9l7.500-7.500L16 9" />
          </svg>
        </button>
        <button type="button" className="ml-[20px]">ENG</button>
        <button type="button" aria-label="Network" className="ml-[23px]">
          <svg width="21" height="21" viewBox="0 0 21 21" fill="none" stroke="#f0f0f0" strokeWidth="1.500">
            <path d="M13 2.500H2.500a1.500 1.500 0 0 0-1.500 1.500v10.500a1.500 1.500 0 0 0 1.500 1.500H15M4 19.500h11M7 16v3M12 16v3" />
            <path d="M14.500 1h5v6l-1.500 2h-2L14.500 7zM17 9v11" />
          </svg>
        </button>
        <button type="button" aria-label="Volume" className="ml-[9px]">
          <svg width="21" height="18" viewBox="0 0 21 18" fill="none" stroke="#f0f0f0" strokeWidth="1.400">
            <path d="M1 6.500h3.500L9 2.500v13l-4.500-4H1z" />
            <path d="M11.500 6c1.500 2 1.500 4 0 6M14 4c2.500 3 2.500 7 0 10M16.500 2c4 4 4 10 0 14" />
          </svg>
        </button>
        <div className="w-[87px] text-right leading-[20px]">
          <div>8:45 AM</div>
          <div>14-Dec-24</div>
        </div>
      </div>
    </div>
  );
}

export default function App() {
  return (
    <div className="flex h-screen flex-col overflow-hidden bg-[#212121] font-['Open_Sans','Noto_Sans',sans-serif]">
      <div className="flex min-h-0 flex-1 flex-col bg-[#444444]">
        <TitleBar />
        <Tabs />
        <Ribbon />
        <main className="mx-[3px] flex min-h-0 flex-1 bg-[#212121] pt-[3px] pr-[4px] pb-[5px] pl-[4px]">
          <ReportData />
          <div className="ml-[3px] flex min-w-0 flex-1 flex-col border-l border-[#666666] pt-[10px]">
            <HorizontalRuler />
            <div className="flex min-h-0 flex-1">
              <VerticalRuler />
              <Page />
              <div className="w-[21px] shrink-0 bg-[#f0f0f0] pt-[21px]">
                <div className="mx-auto h-[172px] w-[6px] rounded-sm bg-[#858585]" />
              </div>
            </div>
            <Groups />
          </div>
        </main>
        <StatusBar />
        <div className="h-[4px] shrink-0 bg-[#444444]" />
      </div>
      <Taskbar />
    </div>
  );
}
